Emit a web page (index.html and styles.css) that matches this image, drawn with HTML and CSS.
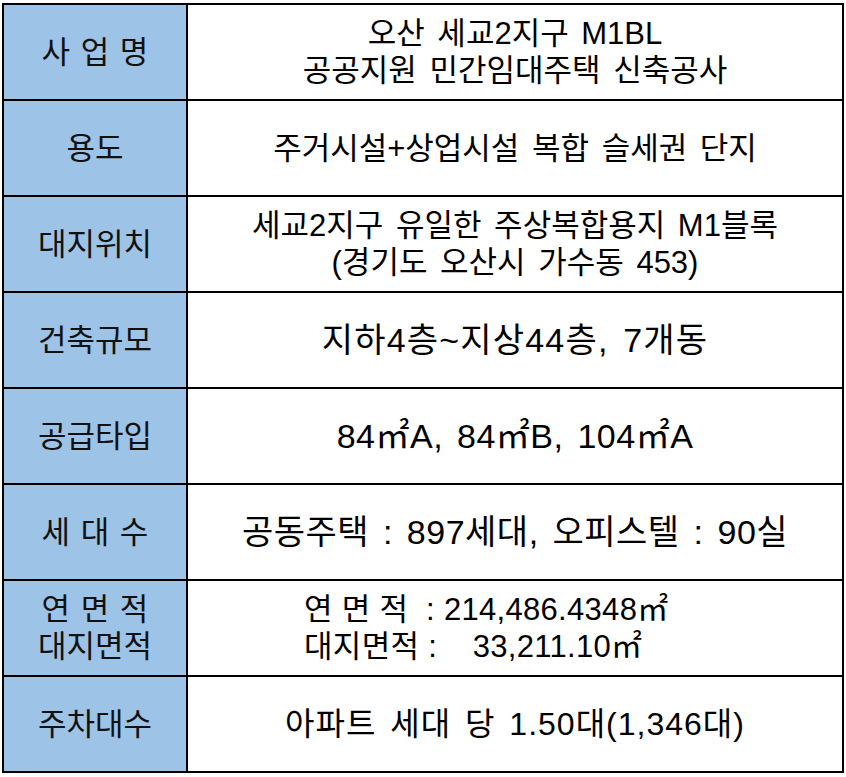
FILE: index.html
```html
<!DOCTYPE html>
<html lang="ko">
<head>
<meta charset="utf-8">
<title>사업개요</title>
<link rel="stylesheet" href="styles.css">
</head>
<body>
<div class="sheet">
  <div class="cell head sp">사 업 명</div>
  <div class="cell val"><span>오산 세교2지구 M1BL</span><span>공공지원 민간임대주택 신축공사</span></div>

  <div class="cell head">용도</div>
  <div class="cell val"><span>주거시설+상업시설 복합 슬세권 단지</span></div>

  <div class="cell head">대지위치</div>
  <div class="cell val"><span>세교2지구 유일한 주상복합용지 M1블록</span><span>(경기도 오산시 가수동 453)</span></div>

  <div class="cell head">건축규모</div>
  <div class="cell val big wide"><span>지하4층~지상44층, 7개동</span></div>

  <div class="cell head">공급타입</div>
  <div class="cell val big"><span>84㎡A, 84㎡B, 104㎡A</span></div>

  <div class="cell head sp">세 대 수</div>
  <div class="cell val big"><span>공동주택 : 897세대, 오피스텔 : 90실</span></div>

  <div class="cell head sp"><span>연 면 적</span><span>대지면적</span></div>
  <div class="cell val area"><span>연 면 적  : 214,486.4348㎡</span><span>대지면적 :    33,211.10㎡</span></div>

  <div class="cell head">주차대수</div>
  <div class="cell val park"><span>아파트 세대 당 1.50대(1,346대)</span></div>
</div>
</body>
</html>
```

FILE: styles.css
```css
html, body {
  margin: 0;
  padding: 0;
  background: #ffffff;
}
body {
  padding: 3px 0 0 2px;
  font-family: "Liberation Sans", "Noto Sans CJK KR", sans-serif;
  color: #000000;
}
.sheet {
  display: grid;
  grid-template-columns: 184px 656px;
  grid-auto-rows: 96px;
  width: 840px;
  border-top: 2px solid #000;
  border-left: 2px solid #000;
}
.cell {
  box-sizing: border-box;
  border-right: 2px solid #000;
  border-bottom: 2px solid #000;
  display: flex;
  flex-direction: column;
  align-items: center;
  justify-content: center;
  line-height: 37px;
  white-space: pre;
}
.head {
  background: #9dc3e6;
  font-size: 31px;
  color: #111111;
}
.head.sp {
  word-spacing: 2px;
}
.val {
  font-size: 31px;
  word-spacing: 4px;
}
.val.big {
  font-size: 34px;
  letter-spacing: 0.5px;
}
.val.big.wide {
  letter-spacing: 1.2px;
}
.val.park {
  font-size: 32px;
  letter-spacing: 1px;
}
.val.area {
  align-items: flex-start;
  padding-left: 116px;
  font-size: 31px;
  word-spacing: 0;
  letter-spacing: 0.3px;
}
```
